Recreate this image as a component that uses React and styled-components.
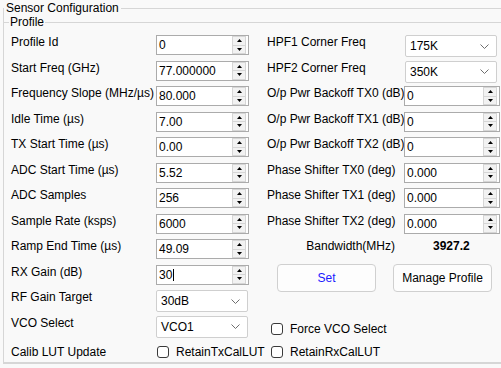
import styled, { createGlobalStyle } from 'styled-components';

const GlobalStyle = createGlobalStyle`
  html, body {
    margin: 0;
    padding: 0;
    background: #f9f9f9;
    overflow: hidden;
  }
  body {
    font-family: "Liberation Sans", Arial, sans-serif;
    font-size: 12px;
    color: #000;
  }
`;

const Page = styled.div`
  width: 501px;
  height: 368px;
  overflow: hidden;
`;

const Group = styled.fieldset`
  margin: 0 0 0 3px;
  padding: 0;
  border: 1px solid #d6d6d6;
  width: 560px;
  min-width: 0;
  box-sizing: border-box;
`;

const GroupTitle = styled.legend`
  padding: 0 2px;
  line-height: 16px;
  font-size: 12px;
`;

const SubGroup = styled.fieldset`
  margin: 0 0 0 -1px;
  padding: 7px 0 0 7px;
  border: 1px solid #d6d6d6;
  min-width: 0;
`;

const SubTitle = styled.legend`
  padding: 0 1px;
  margin-left: -2px;
  line-height: 12px;
  font-size: 12px;
`;

const Form = styled.div`
  display: grid;
  grid-template-columns: 145px 93px 18px 137px 96px;
  grid-template-rows: repeat(12, 25.5px) 21px;
`;

const Label = styled.div`
  grid-column: ${(p) => p.$col};
  grid-row: ${(p) => p.$row};
  align-self: ${(p) => (p.$center ? 'center' : 'stretch')};
  line-height: 14px;
  white-space: nowrap;
`;

const SpinBox = styled.div`
  grid-column: ${(p) => p.$col};
  grid-row: ${(p) => p.$row};
  align-self: start;
  display: flex;
  align-items: center;
  height: 20px;
  box-sizing: border-box;
  border: 1px solid #ababab;
  background: #fff;
  padding-left: 2px;
`;

const SpinText = styled.span`
  flex: 1;
  white-space: nowrap;
  line-height: 14px;
  display: flex;
  align-items: center;
`;

const Caret = styled.span`
  display: inline-block;
  width: 1px;
  height: 12px;
  background: #000;
  margin-left: 1px;
`;

const Spinner = styled.div`
  display: flex;
  flex-direction: column;
  width: 14px;
  height: 18px;
  margin-right: 2px;
  box-sizing: border-box;
`;

const SpinHalf = styled.div`
  flex: 1;
  display: flex;
  align-items: center;
  justify-content: center;
  background: #f2f2f2;
  border: 1px solid #d6d6d6;
  & + & {
    border-top: none;
  }
`;

const Combo = styled.div`
  grid-column: ${(p) => p.$col};
  grid-row: ${(p) => p.$row};
  align-self: start;
  display: flex;
  align-items: center;
  justify-content: space-between;
  width: 92px;
  height: 22px;
  box-sizing: border-box;
  margin-left: ${(p) => p.$inset || 0}px;
  padding: 0 7px 0 4px;
  border: 1px solid #cfcfcf;
  border-radius: 2px;
  background: #fff;
  white-space: nowrap;
`;

const Value = styled.div`
  grid-column: 5;
  grid-row: 9;
  line-height: 14px;
  font-weight: bold;
  padding-left: 29px;
`;

const BandLabel = styled.div`
  grid-column: 4;
  grid-row: 9;
  line-height: 14px;
  text-align: right;
  padding-right: 9px;
  white-space: nowrap;
`;

const ButtonBar = styled.div`
  grid-column: 4 / span 2;
  grid-row: 10 / span 2;
  display: flex;
  align-items: flex-start;
  gap: 17px;
  padding-left: 10px;
  margin-top: -1px;
`;

const Button = styled.button`
  width: 99px;
  height: 28px;
  padding: 0;
  font-family: inherit;
  font-size: 12px;
  color: ${(p) => (p.$accent ? '#1a1aff' : '#000')};
  background: #fdfdfd;
  border: 1px solid #d0d0d0;
  border-radius: 4px;
`;

const CheckLine = styled.div`
  grid-column: ${(p) => p.$col};
  grid-row: ${(p) => p.$row};
  display: flex;
  align-items: center;
  gap: 7px;
  height: ${(p) => p.$h || 21}px;
  margin-top: ${(p) => p.$top || 0}px;
  padding-left: ${(p) => p.$indent || 0}px;
  white-space: nowrap;
  line-height: 14px;
`;

const Box = styled.span`
  width: 12px;
  height: 12px;
  box-sizing: border-box;
  border: 1px solid #3a3a3a;
  border-radius: 3px;
  background: #fff;
  flex: none;
`;

const Arrow = ({ down }) => (
  <svg width="5" height="3" viewBox="0 0 5 3">
    <polygon points={down ? '0,0 5,0 2.5,3' : '0,3 5,3 2.5,0'} fill="#000" />
  </svg>
);

const Chevron = () => (
  <svg width="9" height="5" viewBox="0 0 9 5">
    <polyline points="0.5,0.5 4.5,4.5 8.5,0.5" fill="none" stroke="#6e6e6e" strokeWidth="1" />
  </svg>
);

const Spin = ({ col, row, value, caret }) => (
  <SpinBox $col={col} $row={row}>
    <SpinText>
      {value}
      {caret && <Caret />}
    </SpinText>
    <Spinner>
      <SpinHalf><Arrow /></SpinHalf>
      <SpinHalf><Arrow down /></SpinHalf>
    </Spinner>
  </SpinBox>
);

const Select = ({ col, row, value, inset }) => (
  <Combo $col={col} $row={row} $inset={inset}>
    <span>{value}</span>
    <Chevron />
  </Combo>
);

const leftRows = [
  { label: 'Profile Id', spin: '0' },
  { label: 'Start Freq (GHz)', spin: '77.000000' },
  { label: 'Frequency Slope (MHz/µs)', spin: '80.000' },
  { label: 'Idle Time (µs)', spin: '7.00' },
  { label: 'TX Start Time (µs)', spin: '0.00' },
  { label: 'ADC Start Time (µs)', spin: '5.52' },
  { label: 'ADC Samples', spin: '256' },
  { label: 'Sample Rate (ksps)', spin: '6000' },
  { label: 'Ramp End Time (µs)', spin: '49.09' },
  { label: 'RX Gain (dB)', spin: '30', caret: true },
  { label: 'RF Gain Target', select: '30dB' },
  { label: 'VCO Select', select: 'VCO1' },
];

const rightRows = [
  { label: 'HPF1 Corner Freq', select: '175K' },
  { label: 'HPF2 Corner Freq', select: '350K' },
  { label: 'O/p Pwr Backoff TX0 (dB)', spin: '0' },
  { label: 'O/p Pwr Backoff TX1 (dB)', spin: '0' },
  { label: 'O/p Pwr Backoff TX2 (dB)', spin: '0' },
  { label: 'Phase Shifter TX0 (deg)', spin: '0.000' },
  { label: 'Phase Shifter TX1 (deg)', spin: '0.000' },
  { label: 'Phase Shifter TX2 (deg)', spin: '0.000' },
];

const renderRow = (r, i, labelCol, ctrlCol, inset) => [
  <Label key={`l${labelCol}-${i}`} $col={labelCol} $row={i + 1}>
    {r.label}
  </Label>,
  r.select ? (
    <Select key={`c${ctrlCol}-${i}`} col={ctrlCol} row={i + 1} value={r.select} inset={inset} />
  ) : (
    <Spin key={`c${ctrlCol}-${i}`} col={ctrlCol} row={i + 1} value={r.spin} caret={r.caret} />
  ),
];

export default function App() {
  return (
    <Page>
      <GlobalStyle />
      <Group>
        <GroupTitle>Sensor Configuration</GroupTitle>
        <SubGroup>
          <SubTitle>Profile</SubTitle>
          <Form>
            {leftRows.map((r, i) => renderRow(r, i, 1, 2, 0))}
            {rightRows.map((r, i) => renderRow(r, i, 4, 5, 1))}

            <BandLabel>Bandwidth(MHz)</BandLabel>
            <Value>3927.2</Value>

            <ButtonBar>
              <Button $accent>Set</Button>
              <Button>Manage Profile</Button>
            </ButtonBar>

            <CheckLine $col="4 / span 2" $row={12} $h={22} $top={2} $indent={4}>
              <Box />
              Force VCO Select
            </CheckLine>

            <Label $col={1} $row={13} $center>Calib LUT Update</Label>
            <CheckLine $col="2 / span 2" $row={13} $indent={1}>
              <Box />
              RetainTxCalLUT
            </CheckLine>
            <CheckLine $col="4 / span 2" $row={13} $indent={4}>
              <Box />
              RetainRxCalLUT
            </CheckLine>
          </Form>
        </SubGroup>
      </Group>
    </Page>
  );
}
